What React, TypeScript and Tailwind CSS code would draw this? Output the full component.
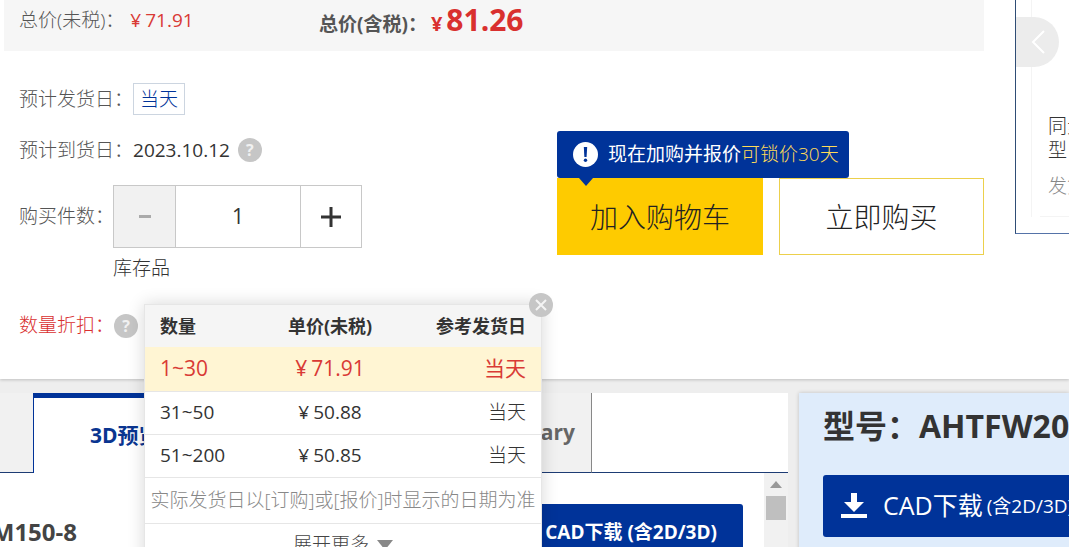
import { useState } from "react";
import type { ReactNode } from "react";

interface PriceTier {
  range: string;
  price: string;
  shipping: string;
}

const tiers: PriceTier[] = [
  { range: "1~30", price: "71.91", shipping: "当天" },
  { range: "31~50", price: "50.88", shipping: "当天" },
  { range: "51~200", price: "50.85", shipping: "当天" },
];

function HelpButton({ label }: { label: string }) {
  return (
    <button
      type="button"
      aria-label={label}
      className="flex size-6 shrink-0 items-center justify-center rounded-full bg-[#c6c6c6] text-base font-bold leading-none text-[#f1f1f1]"
    >
      ?
    </button>
  );
}

function Row({ label, className, children }: { label: string; className: string; children: ReactNode }) {
  return (
    <div className={`flex items-center ${className}`}>
      <span className="shrink-0 whitespace-nowrap font-light">{label}</span>
      {children}
    </div>
  );
}

function DiscountPopup({ onClose }: { onClose: () => void }) {
  return (
    <div className="absolute left-36 top-0 z-20 w-[398px] border border-[#e6e6e6] bg-white text-[#333] shadow-[0_0_16px_rgba(0,0,0,0.16)]">
      <button
        type="button"
        aria-label="关闭"
        onClick={onClose}
        className="absolute -right-3 -top-3 z-10 flex size-6 items-center justify-center rounded-full bg-[#c6c6c6]"
      >
        <svg viewBox="0 0 12 12" className="size-3" fill="none" stroke="#f4f4f4" strokeWidth="2">
          <path d="M1 1l10 10M11 1L1 11" />
        </svg>
      </button>
      <table className="w-full table-fixed border-collapse whitespace-nowrap">
        <thead>
          <tr className="h-[42px] bg-[#f5f5f5] text-lg font-bold">
            <th scope="col" className="w-[100px] pl-[15px] text-left">数量</th>
            <th scope="col" className="w-[170px] text-center">单价(未税)</th>
            <th scope="col" className="pr-[15px] text-right">参考发货日</th>
          </tr>
        </thead>
        <tbody>
          {tiers.map((tier, i) => (
            <tr
              key={tier.range}
              className={
                i === 0
                  ? "h-11 border-b border-[#e6e6e6] bg-[#fff5d3] text-[21px] text-[#d93a35]"
                  : "h-[43px] border-b border-[#e6e6e6] font-light"
              }
            >
              <td className="pl-[15px] font-normal">{tier.range}</td>
              <td className="text-center font-normal">
                <span className="mr-1">¥</span>
                {tier.price}
              </td>
              <td className="pr-[15px] text-right">{tier.shipping}</td>
            </tr>
          ))}
        </tbody>
      </table>
      <p className="flex h-[46px] items-center justify-center whitespace-nowrap border-b border-[#e6e6e6] font-light text-[#888]">
        实际发货日以[订购]或[报价]时显示的日期为准
      </p>
      <button type="button" className="flex h-[42px] w-full items-center justify-center gap-2 font-light text-[#444]">
        展开更多
        <svg viewBox="0 0 16 10" className="h-[10px] w-4" fill="#888">
          <path d="M0 0h16L8 10z" />
        </svg>
      </button>
    </div>
  );
}

function ProductSection() {
  const [quantity, setQuantity] = useState(1);
  const [open, setOpen] = useState(true);

  return (
    <section className="relative flex h-[379px] shrink-0 bg-white shadow-[0_1px_3px_rgba(0,0,0,0.2)]">
      <div className="min-w-0 flex-1">
        <div className="ml-1 flex h-[51px] items-center bg-[#f6f6f6] pb-[10px] pl-[15px]">
          <div className="flex w-[300px] items-baseline gap-[6px]">
            <span className="font-light">总价(未税)：</span>
            <span className="text-[#d93a35]">
              <span className="mr-1">¥</span>71.91
            </span>
          </div>
          <div className="flex items-baseline gap-1 font-bold text-[#555]">
            <span>总价(含税)：</span>
            <span className="text-xl text-[#d9302f]">¥</span>
            <span className="text-[30px] leading-9 text-[#d9302f]">81.26</span>
          </div>
        </div>

        <div className="flex items-start justify-between pl-[19px] pt-8">
          <div>
            <Row label="预计发货日：" className="h-8">
              <a href="#shipping" className="flex h-8 items-center border border-[#ccd5e0] px-[6px] font-light text-[#003399]">
                当天
              </a>
            </Row>
            <Row label="预计到货日：" className="mt-[19px] h-8">
              <span className="mr-2 text-[#333]">2023.10.12</span>
              <HelpButton label="到货日说明" />
            </Row>
            <div className="mt-[19px] flex items-center">
              <label htmlFor="quantity" className="w-[94px] whitespace-nowrap font-light">
                购买件数：
              </label>
              <div className="flex h-[63px] border border-[#c8c8c8]">
                <button
                  type="button"
                  aria-label="减少"
                  disabled={quantity === 1}
                  onClick={() => setQuantity(quantity - 1)}
                  className="flex w-[61px] items-center justify-center bg-[#f1f1f1]"
                >
                  <svg viewBox="0 0 12 4" className="h-1 w-3" fill="#aaa">
                    <path d="M0 0h12v3H0z" />
                  </svg>
                </button>
                <input
                  id="quantity"
                  type="text"
                  value={quantity}
                  onChange={(e) => setQuantity(Number(e.target.value) || 1)}
                  className="w-[126px] border-x border-[#c8c8c8] bg-white text-center text-[21px] text-[#333]"
                />
                <button
                  type="button"
                  aria-label="增加"
                  onClick={() => setQuantity(quantity + 1)}
                  className="flex w-[60px] items-center justify-center"
                >
                  <svg viewBox="0 0 20 20" className="size-5" fill="none" stroke="#333" strokeWidth="3">
                    <path d="M10 0v20M0 10h20" />
                  </svg>
                </button>
              </div>
            </div>
            <p className="ml-[94px] mt-[6px] font-light leading-7 text-[#333]">库存品</p>
          </div>

          <div className="mt-12">
            <div className="relative flex h-[47px] w-[292px] items-center gap-[10px] rounded-[3px] bg-[#003399] pl-4 text-white">
              <svg viewBox="0 0 25 25" className="size-[25px] shrink-0">
                <circle cx="12.5" cy="12.5" r="12.5" fill="#fff" />
                <path d="M10.8 5h3.4l-.6 10h-2.2z" fill="#003399" />
                <circle cx="12.5" cy="18.3" r="1.7" fill="#003399" />
              </svg>
              <span className="whitespace-nowrap">
                现在加购并报价<span className="font-light text-[#ffdb58]">可锁价30天</span>
              </span>
              <svg viewBox="0 0 14 8" className="absolute left-[22px] top-full h-2 w-[14px]" fill="#003399">
                <path d="M0 0h14L7 8z" />
              </svg>
            </div>
            <div className="flex gap-4 text-[28px] font-light text-[#222]">
              <button type="button" className="h-[77px] w-[206px] bg-[#fecb00]">
                加入购物车
              </button>
              <button type="button" className="h-[77px] w-[205px] border border-[#ecd04c] bg-white">
                立即购买
              </button>
            </div>
          </div>
        </div>
      </div>

      <aside className="ml-[31px] h-[234px] w-[54px] overflow-hidden border-b border-l border-b-[#5573a8] border-l-[#2f4d75]">
        <div className="ml-[15px] border-l border-[#f4f4f4] font-light">
          <div className="relative h-[114px]">
            <button
              type="button"
              aria-label="上一个"
              className="absolute -left-4 top-[17px] flex h-[50px] w-[43px] items-center justify-center rounded-r-full bg-[#ececec]"
            >
              <svg viewBox="0 0 16 26" className="h-[26px] w-4" fill="none" stroke="#fff" strokeWidth="2">
                <path d="M14 2L3 13l11 11" />
              </svg>
            </button>
          </div>
          <p className="ml-4 w-[110px] leading-6 text-[#333]">
            同步带轮
            <br />型
          </p>
          <p className="ml-4 mt-3 h-[42px] w-[110px] whitespace-nowrap leading-6 text-[#888]">发货日</p>
          <div className="ml-2 border-t border-[#f4f4f4]" />
        </div>
      </aside>

      <div className="absolute left-0 top-[304px]">
        <Row label="数量折扣：" className="h-[43px] pl-[19px] text-[#d9302f]">
          <HelpButton label="数量折扣说明" />
        </Row>
        {open && <DiscountPopup onClose={() => setOpen(false)} />}
      </div>
    </section>
  );
}

function PreviewPanel() {
  return (
    <section className="flex min-w-0 flex-1 flex-col bg-white">
      <div className="flex h-20 text-[21px] font-bold">
        <button type="button" aria-label="图纸" className="w-[33px] border-b border-[#1d3c74] bg-[#f1f1f1]" />
        <button
          type="button"
          className="w-[180px] border-x border-t-[5px] border-[#003399] pl-14 text-left text-[#0a3590]"
        >
          3D预览
        </button>
        <button
          type="button"
          className="w-[379px] border-b border-r border-b-[#1d3c74] border-r-[#888] bg-[#f1f1f1] pr-4 text-right text-[#666]"
        >
          CAD Library
        </button>
        <div className="flex-1 border-b border-[#1d3c74]" />
      </div>
      <div className="flex flex-1">
        <div className="flex flex-1 items-start justify-between pt-[31px]">
          <h2 className="flex w-[77px] justify-end overflow-hidden whitespace-nowrap pt-2 text-2xl font-bold leading-10 text-[#444]">
            M150-8
          </h2>
          <button
            type="button"
            className="mr-[21px] flex h-14 w-[260px] items-center justify-end rounded-[3px] bg-[#003399] pr-[26px] font-bold text-white"
          >
            CAD下载 (含2D/3D)
          </button>
        </div>
        <div className="flex w-6 flex-col items-center bg-[#f1f1f1] pt-2">
          <svg viewBox="0 0 12 7" className="h-[7px] w-3" fill="#999">
            <path d="M0 7h12L6 0z" />
          </svg>
          <div className="mt-2 h-6 w-5 bg-[#bfbfbf]" />
        </div>
      </div>
    </section>
  );
}

function ModelPanel() {
  return (
    <section className="w-[270px] shrink-0 overflow-hidden whitespace-nowrap bg-[#dfecfb] pl-6 pt-[10px] shadow-[0_0_4px_rgba(0,0,0,0.2)]">
      <h2 className="text-[32px] font-bold leading-[46px] text-[#333]">型号：AHTFW20</h2>
      <button
        type="button"
        className="mt-[26px] flex h-[62px] w-[300px] items-center rounded-[3px] bg-[#003399] pl-[18px] text-white"
      >
        <svg viewBox="0 0 26 26" className="mr-4 size-[26px]" fill="#fff">
          <path d="M10 0h6v9h7L13 19 3 9h7zM0 21h26v4H0z" />
        </svg>
        <span className="text-[25px]">CAD下载</span>
        <span className="ml-1">(含2D/3D)</span>
      </button>
    </section>
  );
}

export default function App() {
  return (
    <div
      lang="zh-CN"
      className="flex h-screen flex-col overflow-hidden bg-[#eee] font-['Open_Sans','Noto_Sans_CJK_SC',sans-serif] text-[19px] text-[#555]"
    >
      <ProductSection />
      <main className="mt-[14px] flex flex-1 gap-[11px]">
        <PreviewPanel />
        <ModelPanel />
      </main>
    </div>
  );
}
